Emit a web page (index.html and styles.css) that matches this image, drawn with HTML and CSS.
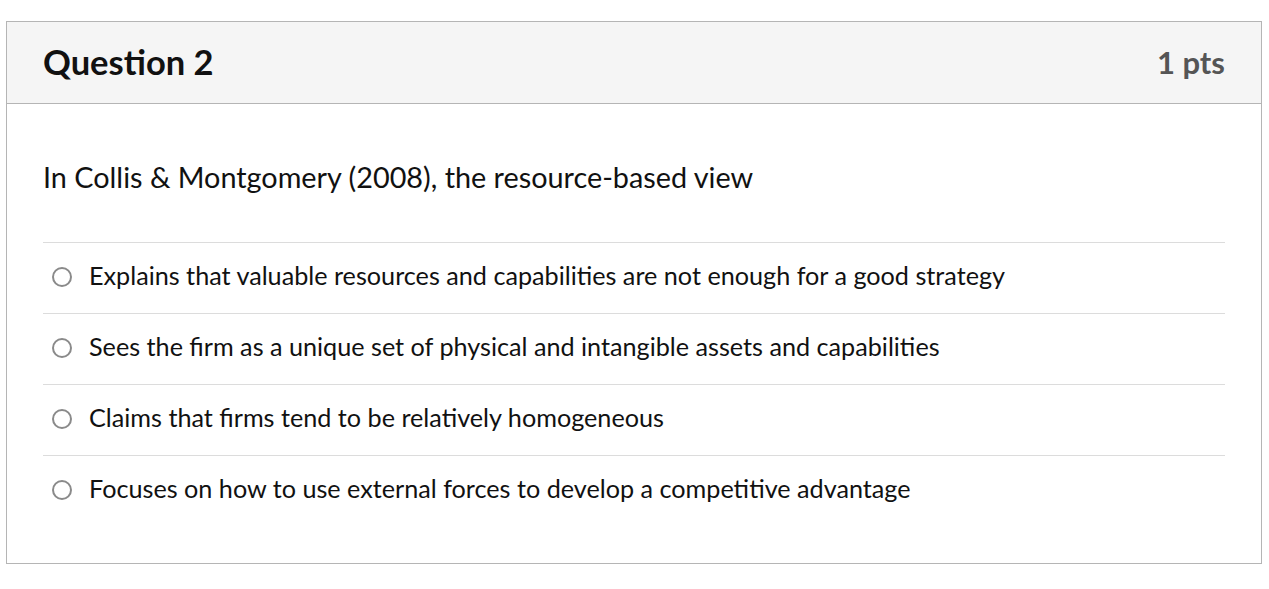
FILE: index.html
```html
<!DOCTYPE html>
<html>
<head>
<meta charset="utf-8">
<link rel="stylesheet" href="styles.css">
</head>
<body>
<div class="card">
  <div class="header">
    <h2 class="title">Question 2</h2>
    <span class="pts">1 pts</span>
  </div>
  <div class="content">
    <p class="question">In Collis &amp; Montgomery (2008), the resource-based view</p>
    <div class="answers">
      <label class="answer"><span class="radio"></span><span class="label">Explains that valuable resources and capabilities are not enough for a good strategy</span></label>
      <label class="answer"><span class="radio"></span><span class="label">Sees the firm as a unique set of physical and intangible assets and capabilities</span></label>
      <label class="answer"><span class="radio"></span><span class="label">Claims that firms tend to be relatively homogeneous</span></label>
      <label class="answer"><span class="radio"></span><span class="label">Focuses on how to use external forces to develop a competitive advantage</span></label>
    </div>
  </div>
</div>
</body>
</html>
```
FILE: styles.css
```css
* { box-sizing: border-box; }
html, body { margin: 0; padding: 0; background: #fff; }
body { font-family: Lato, "Open Sans", sans-serif; color: #111; }
.card {
  margin: 21px 7px 0 6px;
  border: 1px solid #b5b5b5;
}
.header {
  display: flex;
  align-items: center;
  justify-content: space-between;
  height: 82px;
  padding: 0 36px 2px 36px;
  background: #f5f5f5;
  border-bottom: 1px solid #b5b5b5;
}
.title {
  margin: 0;
  font-size: 34.5px;
  font-weight: 700;
  color: #111;
}
.pts {
  font-size: 31px;
  font-weight: 700;
  color: #555;
}
.content {
  padding: 54px 36px 37px 36px;
}
.question {
  margin: 0 0 45px 0;
  font-size: 28.8px;
  line-height: 39px;
}
.answer {
  display: flex;
  align-items: center;
  height: 71px;
  border-top: 1px solid #dcdcdc;
  font-size: 25.2px;
}
.label {
  margin-bottom: 7px;
}
.radio {
  width: 20px;
  height: 20px;
  border: 2px solid #8a8a8a;
  border-radius: 50%;
  margin: 0 17px 2px 9px;
  flex: none;
}
```
